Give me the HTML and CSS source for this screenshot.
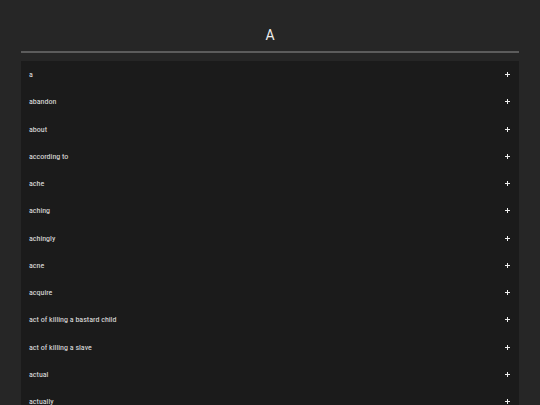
FILE: index.html
```html
<!DOCTYPE html>
<html>
<head>
<meta charset="utf-8">
<link rel="stylesheet" href="styles.css">
</head>
<body>
<div class="page">
  <header class="header"><h1 class="title">A</h1></header>
  <ul class="list">
    <li class="row"><span class="word">a</span><span class="plus"></span></li>
    <li class="row"><span class="word">abandon</span><span class="plus"></span></li>
    <li class="row"><span class="word">about</span><span class="plus"></span></li>
    <li class="row"><span class="word">according to</span><span class="plus"></span></li>
    <li class="row"><span class="word">ache</span><span class="plus"></span></li>
    <li class="row"><span class="word">aching</span><span class="plus"></span></li>
    <li class="row"><span class="word">achingly</span><span class="plus"></span></li>
    <li class="row"><span class="word">acne</span><span class="plus"></span></li>
    <li class="row"><span class="word">acquire</span><span class="plus"></span></li>
    <li class="row"><span class="word">act of killing a bastard child</span><span class="plus"></span></li>
    <li class="row"><span class="word">act of killing a slave</span><span class="plus"></span></li>
    <li class="row"><span class="word">actual</span><span class="plus"></span></li>
    <li class="row"><span class="word">actually</span><span class="plus"></span></li>
  </ul>
</div>
</body>
</html>
```
FILE: styles.css
```css
html, body {
  margin: 0;
  padding: 0;
  background: #262626;
  overflow: hidden;
}
.page {
  width: 498px;
  margin: 0 auto;
}
.header {
  padding-top: 27px;
  border-bottom: 2px solid #5c5c5c;
  margin-bottom: 8px;
}
.title {
  margin: 0;
  padding-bottom: 8px;
  text-align: center;
  font-family: Roboto, "Liberation Sans", sans-serif;
  font-weight: 400;
  font-size: 14px;
  line-height: 16px;
  color: #ececec;
}
.list {
  list-style: none;
  margin: 0;
  padding: 0;
  background: #1b1b1b;
}
.row {
  display: flex;
  justify-content: space-between;
  align-items: center;
  padding: 8px 8px 8px 8px;
  height: 11.25px;
  font-family: "Roboto Condensed", "Liberation Sans Narrow", "DejaVu Sans Condensed", Roboto, sans-serif;
  font-stretch: condensed;
  font-size: 8px;
  line-height: 11.25px;
  color: #e4e4e4;
}
.plus {
  position: relative;
  width: 5px;
  height: 5px;
  margin-right: 1px;
}
.plus::before, .plus::after {
  content: "";
  position: absolute;
  background: #f0f0f0;
}
.plus::before {
  left: 0; top: 2px; width: 5px; height: 1px;
}
.plus::after {
  left: 2px; top: 0; width: 1px; height: 5px;
}
```
